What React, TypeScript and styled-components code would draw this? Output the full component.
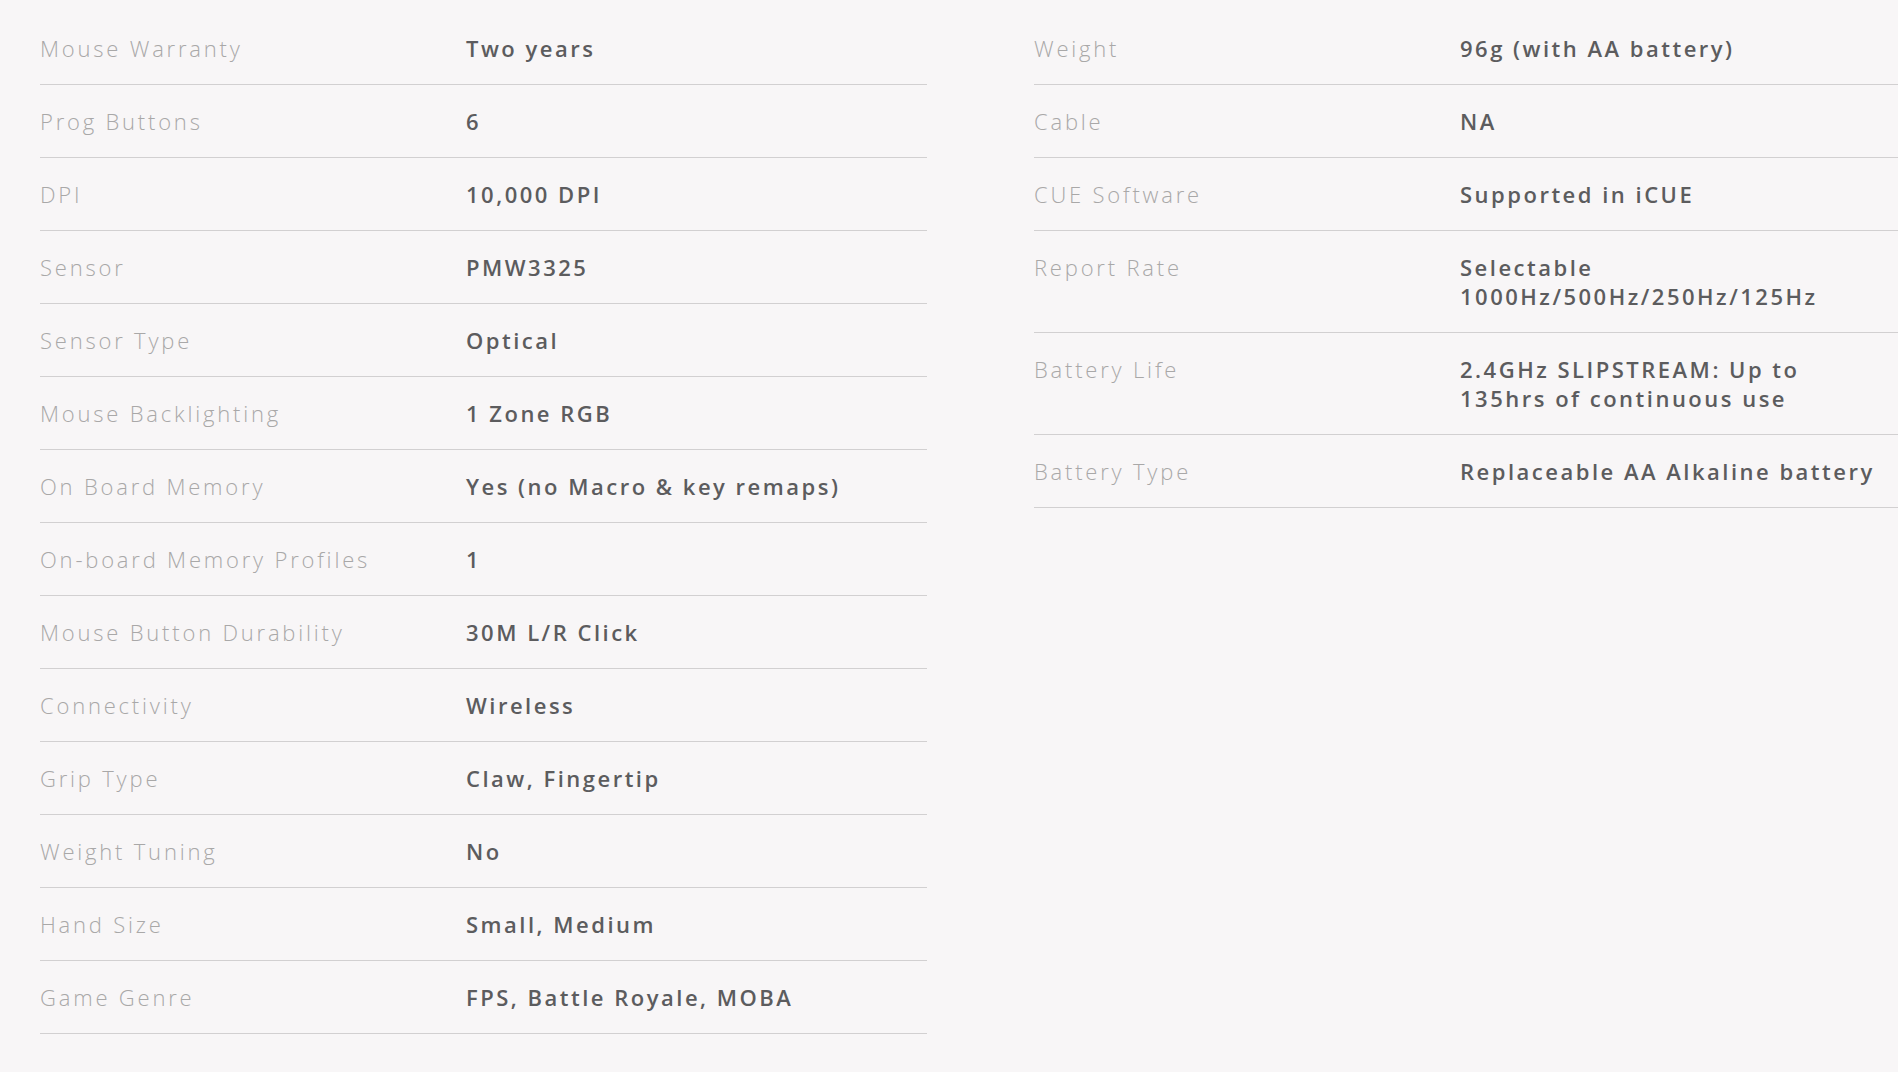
import React from 'react'
import styled, { createGlobalStyle } from 'styled-components'

const GlobalStyle = createGlobalStyle`
  html, body {
    margin: 0;
    padding: 0;
    background: #f8f6f7;
    overflow: hidden;
  }
  body {
    font-family: "Open Sans", Lato, sans-serif;
  }
`

const Page = styled.div`
  width: 1898px;
  height: 1072px;
  overflow: hidden;
  background: #f8f6f7;
`

const SpecGrid = styled.div`
  display: grid;
  grid-template-columns: 887px 887px;
  column-gap: 107px;
  align-items: start;
  padding: 12px 0 0 40px;
`

const SpecColumn = styled.div`
  display: flex;
  flex-direction: column;
`

const SpecRow = styled.div`
  display: grid;
  grid-template-columns: 426px 1fr;
  padding: 22px 0 21px;
  border-bottom: 1px solid #d2d0d1;
`

const Label = styled.div`
  font-size: 22px;
  line-height: 29px;
  font-weight: 300;
  letter-spacing: 2.8px;
  color: #a9a8a8;
`

const Value = styled.div`
  font-size: 22px;
  line-height: 29px;
  font-weight: 600;
  letter-spacing: 2.5px;
  color: #5c5c5e;
  white-space: pre-line;
`

type Spec = [string, string]

const leftSpecs: Spec[] = [
  ['Mouse Warranty', 'Two years'],
  ['Prog Buttons', '6'],
  ['DPI', '10,000 DPI'],
  ['Sensor', 'PMW3325'],
  ['Sensor Type', 'Optical'],
  ['Mouse Backlighting', '1 Zone RGB'],
  ['On Board Memory', 'Yes (no Macro & key remaps)'],
  ['On-board Memory Profiles', '1'],
  ['Mouse Button Durability', '30M L/R Click'],
  ['Connectivity', 'Wireless'],
  ['Grip Type', 'Claw, Fingertip'],
  ['Weight Tuning', 'No'],
  ['Hand Size', 'Small, Medium'],
  ['Game Genre', 'FPS, Battle Royale, MOBA'],
]

const rightSpecs: Spec[] = [
  ['Weight', '96g (with AA battery)'],
  ['Cable', 'NA'],
  ['CUE Software', 'Supported in iCUE'],
  ['Report Rate', 'Selectable\n1000Hz/500Hz/250Hz/125Hz'],
  ['Battery Life', '2.4GHz SLIPSTREAM: Up to\n135hrs of continuous use'],
  ['Battery Type', 'Replaceable AA Alkaline battery'],
]

function SpecList({ specs }: { specs: Spec[] }) {
  return (
    <SpecColumn>
      {specs.map(([label, value]) => (
        <SpecRow key={label}>
          <Label>{label}</Label>
          <Value>{value}</Value>
        </SpecRow>
      ))}
    </SpecColumn>
  )
}

export default function App() {
  return (
    <Page>
      <GlobalStyle />
      <SpecGrid>
        <SpecList specs={leftSpecs} />
        <SpecList specs={rightSpecs} />
      </SpecGrid>
    </Page>
  )
}
